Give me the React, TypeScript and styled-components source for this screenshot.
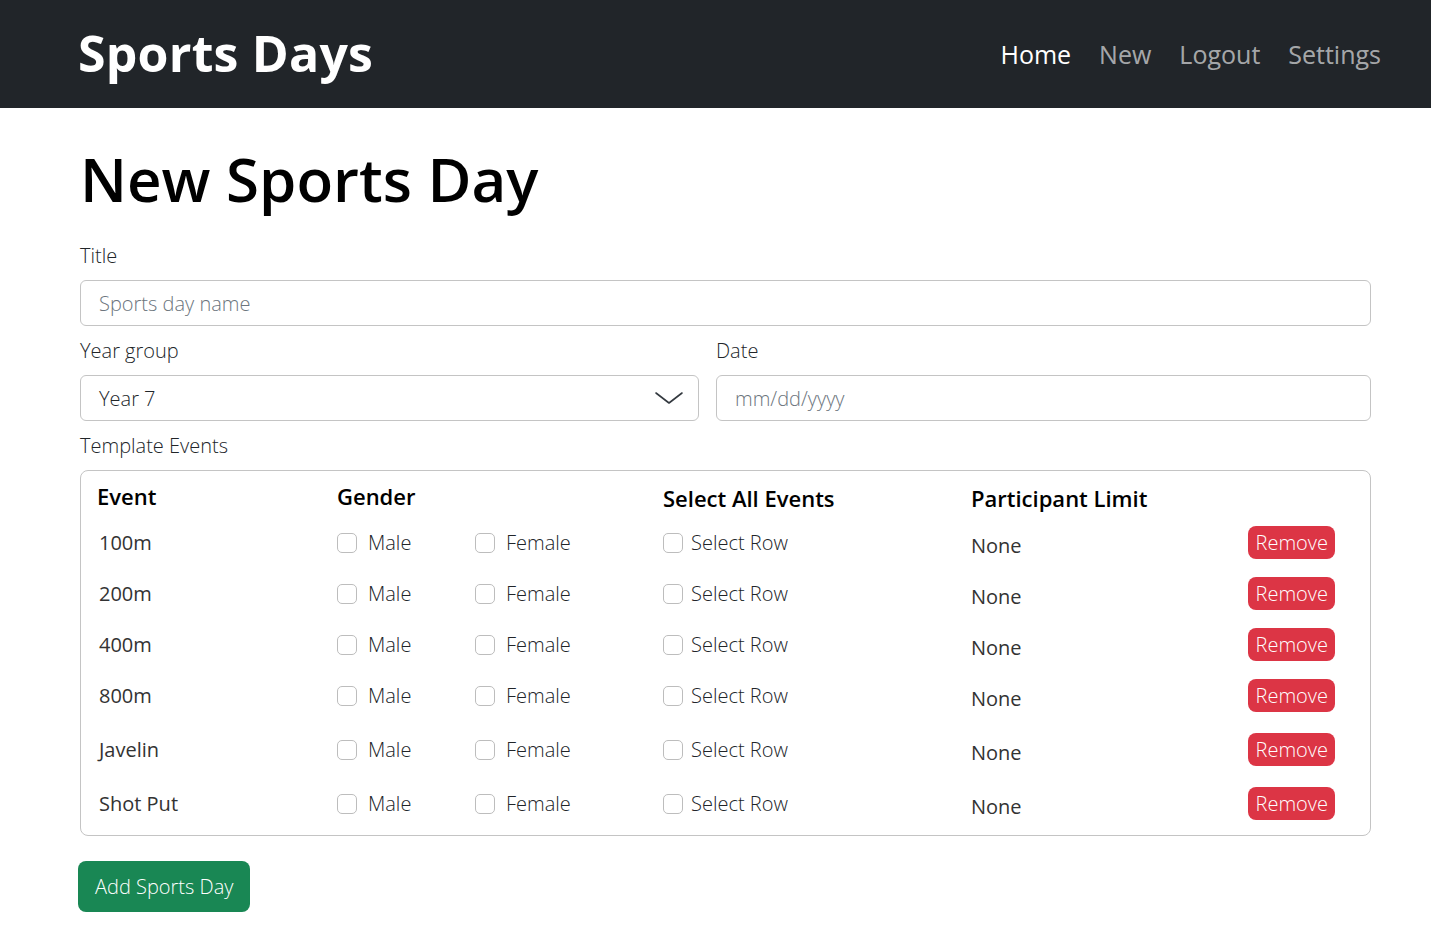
import React from "react";
import styled, { createGlobalStyle } from "styled-components";

const Global = createGlobalStyle`
  html, body { margin: 0; padding: 0; background: #fff; }
  body { font-family: "Open Sans", "Noto Sans", sans-serif; color: #212529; }
  * { box-sizing: border-box; }
`;

const NavBar = styled.nav`
  height: 108px;
  background: #212529;
  display: flex;
  align-items: center;
  justify-content: space-between;
  padding: 0 50px 0 78px;
`;

const Brand = styled.div`
  color: #fff;
  font-size: 50px;
  font-weight: 700;
  letter-spacing: 0.2px;
  margin-top: -2px;
`;

const NavLinks = styled.div`
  display: flex;
  gap: 28px;
`;

const NavLink = styled.a<{ $active?: boolean }>`
  font-size: 25px;
  font-weight: ${(p) => (p.$active ? 500 : 400)};
  color: ${(p) => (p.$active ? "#ffffff" : "rgba(255,255,255,0.62)")};
  text-decoration: none;
`;

const Main = styled.main`
  padding: 0 60px 0 80px;
`;

const Heading = styled.h1`
  margin: 34px 0 26px;
  font-size: 60px;
  font-weight: 600;
  line-height: 74px;
  color: #000;
`;

const Label = styled.label`
  display: block;
  font-size: 20px;
  font-weight: 300;
  line-height: 28px;
  color: #212529;
  margin-bottom: 10px;
`;

const Field = styled.div`
  margin-bottom: 11px;
`;

const Input = styled.input`
  display: block;
  width: 100%;
  height: 46px;
  border: 1px solid #c4c4c4;
  border-radius: 6px;
  padding: 0 18px;
  font-family: inherit;
  font-size: 20px;
  font-weight: 300;
  color: #212529;
  background: #fff;
  outline: none;
  &::placeholder { color: #6c757d; }
`;

const Row2 = styled.div`
  display: grid;
  grid-template-columns: 619px 1fr;
  gap: 17px;
`;

const SelectBox = styled.div`
  height: 46px;
  border: 1px solid #c4c4c4;
  border-radius: 6px;
  padding: 0 14px 0 18px;
  display: flex;
  align-items: center;
  justify-content: space-between;
  font-size: 20px;
  font-weight: 300;
  color: #212529;
`;

const DateBox = styled(SelectBox)`
  color: #6c757d;
`;

const TableBox = styled.div`
  border: 1px solid #c4c4c4;
  border-radius: 8px;
  padding: 4px 35px 6px 16px;
  margin-top: 2px;
`;

const Grid = styled.div<{ $h: number }>`
  display: grid;
  grid-template-columns: 240px 138px 188px 308px 1fr auto;
  align-items: center;
  height: ${(p) => p.$h}px;
`;

const Th = styled.div<{ $span?: number; $dy?: number }>`
  grid-column: span ${(p) => p.$span ?? 1};
  font-size: 22px;
  font-weight: 600;
  color: #000;
  transform: translateY(${(p) => p.$dy ?? 0}px);
`;

const EventName = styled.div`
  font-size: 20px;
  font-weight: 400;
  color: #333;
  padding-left: 2px;
`;

const Check = styled.label<{ $gap?: number }>`
  display: flex;
  align-items: center;
  gap: ${(p) => p.$gap ?? 11}px;
  font-size: 20px;
  font-weight: 300;
  color: #212529;
`;

const Box = styled.span`
  width: 20px;
  height: 20px;
  border: 1px solid #bdbdbd;
  border-radius: 5px;
  display: inline-block;
  background: #fff;
`;

const Limit = styled.div`
  font-size: 20px;
  font-weight: 400;
  color: #333;
  transform: translateY(3px);
`;

const Btn = styled.button<{ $variant: "danger" | "success" }>`
  font-family: inherit;
  font-weight: 300;
  font-size: 20px;
  color: #fff;
  border: none;
  border-radius: 8px;
  background: ${(p) => (p.$variant === "danger" ? "#dc3545" : "#198754")};
  padding: ${(p) => (p.$variant === "danger" ? "0 7px 0 8px" : "0 17px")};
  height: ${(p) => (p.$variant === "danger" ? 33 : 51)}px;
  cursor: pointer;
`;

const Footer = styled.div`
  margin: 25px 0 0 -2px;
`;

const events: { name: string; h: number }[] = [
  { name: "100m", h: 51 },
  { name: "200m", h: 51 },
  { name: "400m", h: 51 },
  { name: "800m", h: 51 },
  { name: "Javelin", h: 57 },
  { name: "Shot Put", h: 51 },
];

const Chevron = () => (
  <svg width="30" height="16" viewBox="0 0 30 16" fill="none">
    <path d="M2 3 L15 13 L28 3" stroke="#343a40" strokeWidth="1.6" strokeLinecap="round" strokeLinejoin="round" />
  </svg>
);

export default function App() {
  return (
    <>
      <Global />
      <NavBar>
        <Brand>Sports Days</Brand>
        <NavLinks>
          <NavLink $active>Home</NavLink>
          <NavLink>New</NavLink>
          <NavLink>Logout</NavLink>
          <NavLink>Settings</NavLink>
        </NavLinks>
      </NavBar>
      <Main>
        <Heading>New Sports Day</Heading>
        <Field>
          <Label>Title</Label>
          <Input placeholder="Sports day name" />
        </Field>
        <Row2>
          <Field>
            <Label>Year group</Label>
            <SelectBox>
              Year 7
              <Chevron />
            </SelectBox>
          </Field>
          <Field>
            <Label>Date</Label>
            <DateBox>mm/dd/yyyy</DateBox>
          </Field>
        </Row2>
        <Label>Template Events</Label>
        <TableBox>
          <Grid $h={42}>
            <Th>Event</Th>
            <Th $span={2}>Gender</Th>
            <Th $dy={2}>Select All Events</Th>
            <Th $dy={2} $span={2}>Participant Limit</Th>
          </Grid>
          {events.map((e) => (
            <Grid key={e.name} $h={e.h}>
              <EventName>{e.name}</EventName>
              <Check>
                <Box />
                Male
              </Check>
              <Check>
                <Box />
                Female
              </Check>
              <Check $gap={8}>
                <Box />
                Select Row
              </Check>
              <Limit>None</Limit>
              <Btn $variant="danger">Remove</Btn>
            </Grid>
          ))}
        </TableBox>
        <Footer>
          <Btn $variant="success">Add Sports Day</Btn>
        </Footer>
      </Main>
    </>
  );
}
